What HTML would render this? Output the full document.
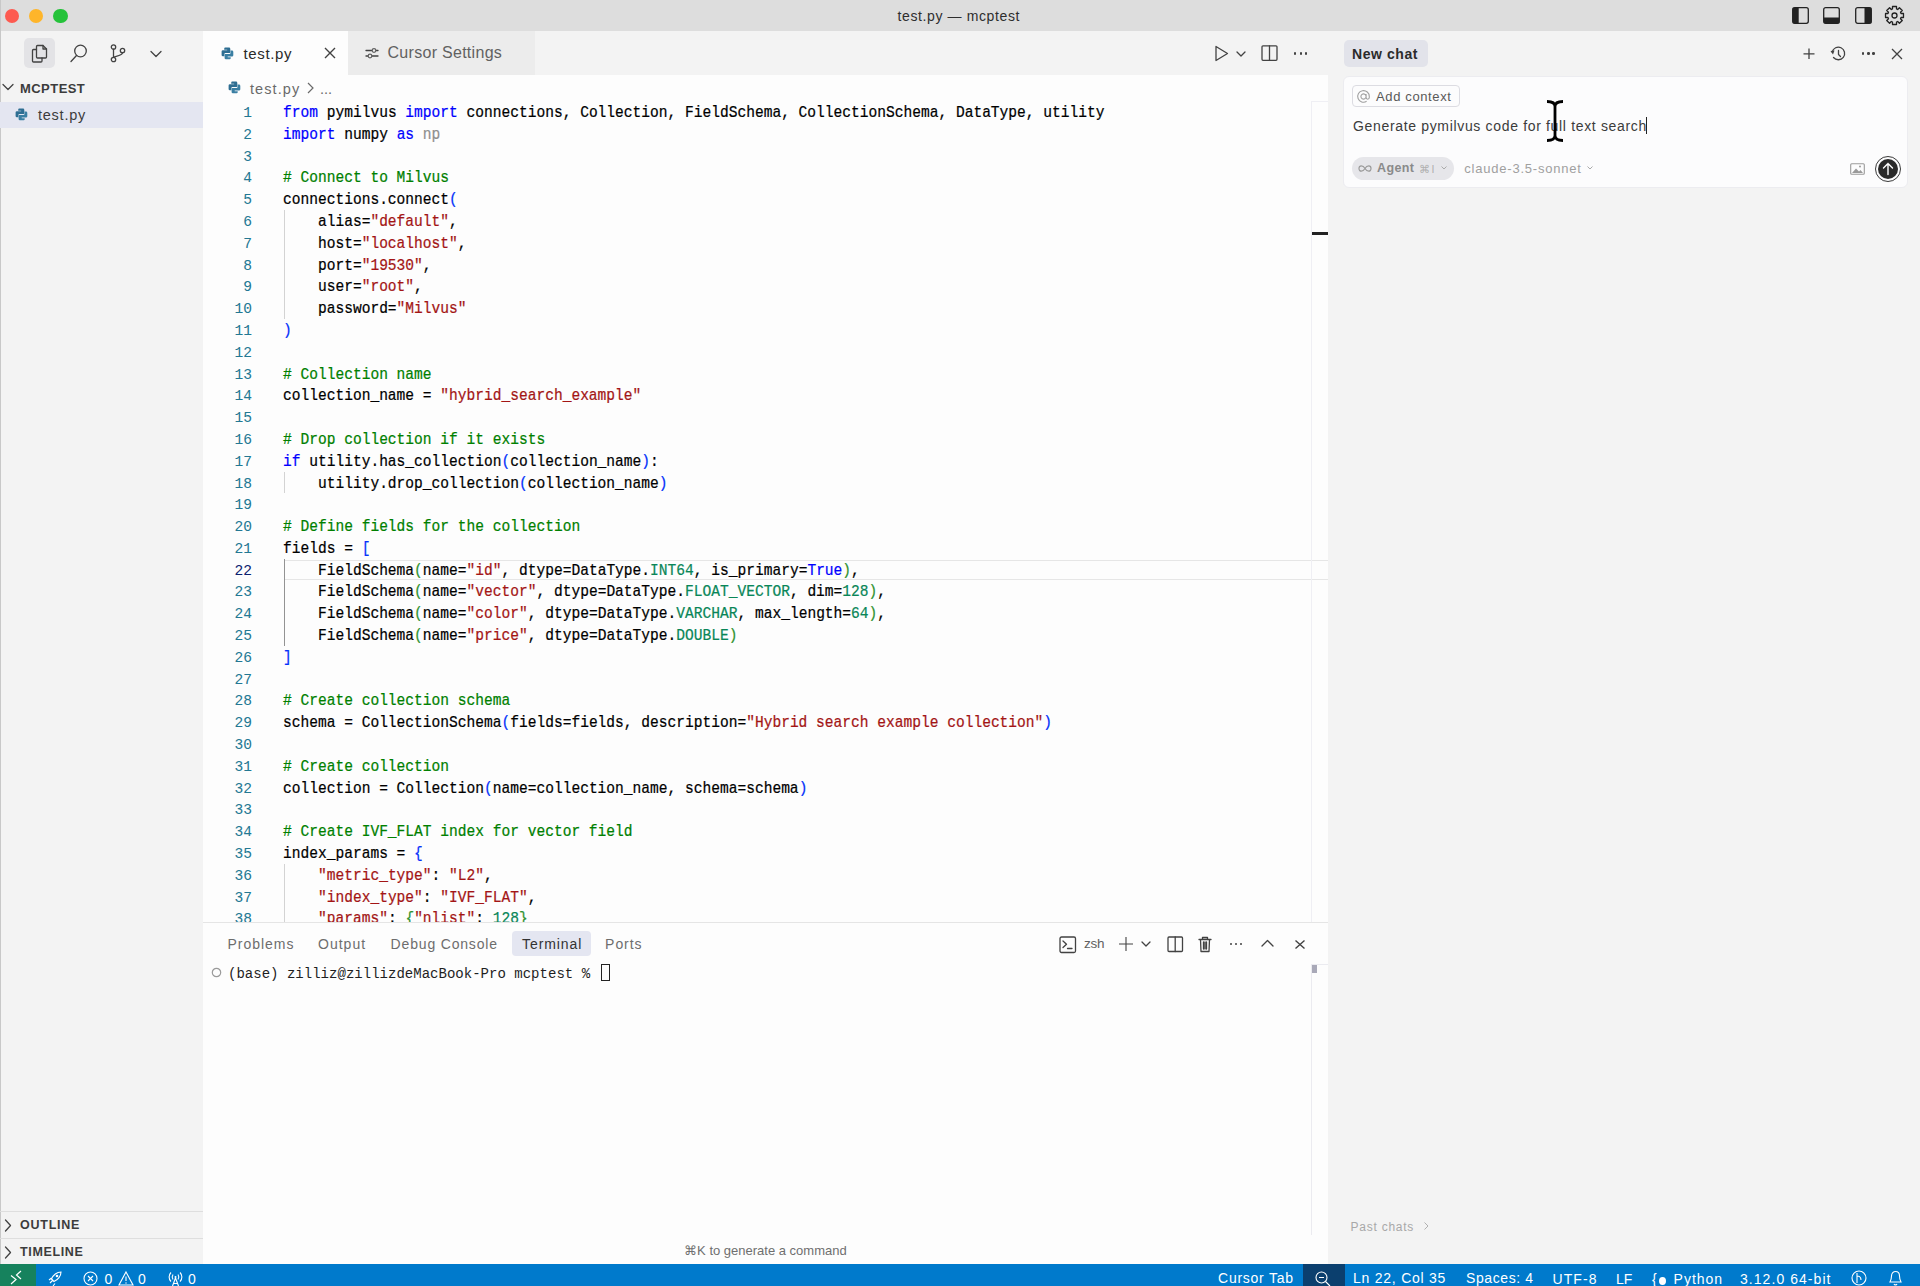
<!DOCTYPE html><html><head><meta charset="utf-8"><style>
*{box-sizing:border-box;margin:0;padding:0}
html,body{width:1920px;height:1286px;overflow:hidden;background:#fdfdfd;font-family:"Liberation Sans",sans-serif;color:#333}
.a{position:absolute;white-space:pre}
.mono{font-family:"Liberation Mono",monospace}
.code{font-family:"Liberation Mono",monospace;font-size:14.57px;line-height:21.78px;color:#000;height:21.78px;-webkit-text-stroke:0.2px currentColor;transform:scaleY(1.08);transform-origin:0 14.77px}
.ln{font-family:"Liberation Mono",monospace;font-size:14.57px;line-height:21.78px;color:#237893;text-align:right;width:60px;height:21.78px;-webkit-text-stroke:0.05px currentColor}
.k{color:#0000ff}.c{color:#008000}.s{color:#a31515}.n{color:#098658}.b1{color:#0431fa}.b2{color:#319331}.g{color:#8f8f8f}
svg{position:absolute;overflow:visible}
</style></head><body>
<div class="a" style="left:0px;top:0px;width:1920px;height:31px;background:#dddddd;"></div>
<div class="a" style="left:0px;top:31px;width:203px;height:1233px;background:#f3f3f3;"></div>
<div class="a" style="left:203px;top:31px;width:1125px;height:44px;background:#f3f3f3;"></div>
<div class="a" style="left:203px;top:75px;width:1125px;height:1189px;background:#fdfdfd;"></div>
<div class="a" style="left:1328px;top:31px;width:592px;height:1233px;background:#f3f3f3;"></div>
<div class="a" style="left:0px;top:1264px;width:1920px;height:22px;background:#007acc;"></div>
<div class="a" style="left:4.999999999999999px;top:9.1px;width:14.4px;height:14.4px;background:#fd5a50;border-radius:50%"></div>
<div class="a" style="left:29.099999999999998px;top:9.1px;width:14.4px;height:14.4px;background:#feb52a;border-radius:50%"></div>
<div class="a" style="left:53.3px;top:9.1px;width:14.4px;height:14.4px;background:#25c23a;border-radius:50%"></div>
<div class="a" style="left:0px;top:0px;width:1px;height:1286px;background:#c8c8c8;"></div>
<div class="a" style="left:897.50px;top:8.55px;font-family:'Liberation Sans',sans-serif;font-size:14px;line-height:1;color:#2e2e2e;font-weight:normal;letter-spacing:0.618px">test.py — mcptest</div>
<div class="a" style="left:285px;top:560px;width:1043px;height:20px;background:transparent;border-top:1px solid #e6e6e6;border-bottom:1.5px solid #e6e6e6"></div>
<div class="a" style="left:203px;top:75px;width:1108px;height:847px;overflow:hidden">
<div class="a ln" style="left:-11px;top:28.10px;color:#237893">1</div>
<div class="a code" style="left:80px;top:28.10px"><span class="k">from</span> pymilvus <span class="k">import</span> connections, Collection, FieldSchema, CollectionSchema, DataType, utility</div>
<div class="a ln" style="left:-11px;top:49.89px;color:#237893">2</div>
<div class="a code" style="left:80px;top:49.89px"><span class="k">import</span> numpy <span class="k">as</span><span class="g"> np</span></div>
<div class="a ln" style="left:-11px;top:71.68px;color:#237893">3</div>
<div class="a code" style="left:80px;top:71.68px"></div>
<div class="a ln" style="left:-11px;top:93.47px;color:#237893">4</div>
<div class="a code" style="left:80px;top:93.47px"><span class="c"># Connect to Milvus</span></div>
<div class="a ln" style="left:-11px;top:115.26px;color:#237893">5</div>
<div class="a code" style="left:80px;top:115.26px">connections.connect<span class="b1">(</span></div>
<div class="a ln" style="left:-11px;top:137.05px;color:#237893">6</div>
<div class="a code" style="left:80px;top:137.05px">    alias=<span class="s">&quot;default&quot;</span>,</div>
<div class="a ln" style="left:-11px;top:158.84px;color:#237893">7</div>
<div class="a code" style="left:80px;top:158.84px">    host=<span class="s">&quot;localhost&quot;</span>,</div>
<div class="a ln" style="left:-11px;top:180.63px;color:#237893">8</div>
<div class="a code" style="left:80px;top:180.63px">    port=<span class="s">&quot;19530&quot;</span>,</div>
<div class="a ln" style="left:-11px;top:202.42px;color:#237893">9</div>
<div class="a code" style="left:80px;top:202.42px">    user=<span class="s">&quot;root&quot;</span>,</div>
<div class="a ln" style="left:-11px;top:224.21px;color:#237893">10</div>
<div class="a code" style="left:80px;top:224.21px">    password=<span class="s">&quot;Milvus&quot;</span></div>
<div class="a ln" style="left:-11px;top:246.00px;color:#237893">11</div>
<div class="a code" style="left:80px;top:246.00px"><span class="b1">)</span></div>
<div class="a ln" style="left:-11px;top:267.79px;color:#237893">12</div>
<div class="a code" style="left:80px;top:267.79px"></div>
<div class="a ln" style="left:-11px;top:289.58px;color:#237893">13</div>
<div class="a code" style="left:80px;top:289.58px"><span class="c"># Collection name</span></div>
<div class="a ln" style="left:-11px;top:311.37px;color:#237893">14</div>
<div class="a code" style="left:80px;top:311.37px">collection_name = <span class="s">&quot;hybrid_search_example&quot;</span></div>
<div class="a ln" style="left:-11px;top:333.16px;color:#237893">15</div>
<div class="a code" style="left:80px;top:333.16px"></div>
<div class="a ln" style="left:-11px;top:354.95px;color:#237893">16</div>
<div class="a code" style="left:80px;top:354.95px"><span class="c"># Drop collection if it exists</span></div>
<div class="a ln" style="left:-11px;top:376.74px;color:#237893">17</div>
<div class="a code" style="left:80px;top:376.74px"><span class="k">if</span> utility.has_collection<span class="b1">(</span>collection_name<span class="b1">)</span>:</div>
<div class="a ln" style="left:-11px;top:398.53px;color:#237893">18</div>
<div class="a code" style="left:80px;top:398.53px">    utility.drop_collection<span class="b1">(</span>collection_name<span class="b1">)</span></div>
<div class="a ln" style="left:-11px;top:420.32px;color:#237893">19</div>
<div class="a code" style="left:80px;top:420.32px"></div>
<div class="a ln" style="left:-11px;top:442.11px;color:#237893">20</div>
<div class="a code" style="left:80px;top:442.11px"><span class="c"># Define fields for the collection</span></div>
<div class="a ln" style="left:-11px;top:463.90px;color:#237893">21</div>
<div class="a code" style="left:80px;top:463.90px">fields = <span class="b1">[</span></div>
<div class="a ln" style="left:-11px;top:485.69px;color:#0b216f">22</div>
<div class="a code" style="left:80px;top:485.69px">    FieldSchema<span class="b2">(</span>name=<span class="s">&quot;id&quot;</span>, dtype=DataType.<span class="n">INT64</span>, is_primary=<span class="k">True</span><span class="b2">)</span>,</div>
<div class="a ln" style="left:-11px;top:507.48px;color:#237893">23</div>
<div class="a code" style="left:80px;top:507.48px">    FieldSchema<span class="b2">(</span>name=<span class="s">&quot;vector&quot;</span>, dtype=DataType.<span class="n">FLOAT_VECTOR</span>, dim=<span class="n">128</span><span class="b2">)</span>,</div>
<div class="a ln" style="left:-11px;top:529.27px;color:#237893">24</div>
<div class="a code" style="left:80px;top:529.27px">    FieldSchema<span class="b2">(</span>name=<span class="s">&quot;color&quot;</span>, dtype=DataType.<span class="n">VARCHAR</span>, max_length=<span class="n">64</span><span class="b2">)</span>,</div>
<div class="a ln" style="left:-11px;top:551.06px;color:#237893">25</div>
<div class="a code" style="left:80px;top:551.06px">    FieldSchema<span class="b2">(</span>name=<span class="s">&quot;price&quot;</span>, dtype=DataType.<span class="n">DOUBLE</span><span class="b2">)</span></div>
<div class="a ln" style="left:-11px;top:572.85px;color:#237893">26</div>
<div class="a code" style="left:80px;top:572.85px"><span class="b1">]</span></div>
<div class="a ln" style="left:-11px;top:594.64px;color:#237893">27</div>
<div class="a code" style="left:80px;top:594.64px"></div>
<div class="a ln" style="left:-11px;top:616.43px;color:#237893">28</div>
<div class="a code" style="left:80px;top:616.43px"><span class="c"># Create collection schema</span></div>
<div class="a ln" style="left:-11px;top:638.22px;color:#237893">29</div>
<div class="a code" style="left:80px;top:638.22px">schema = CollectionSchema<span class="b1">(</span>fields=fields, description=<span class="s">&quot;Hybrid search example collection&quot;</span><span class="b1">)</span></div>
<div class="a ln" style="left:-11px;top:660.01px;color:#237893">30</div>
<div class="a code" style="left:80px;top:660.01px"></div>
<div class="a ln" style="left:-11px;top:681.80px;color:#237893">31</div>
<div class="a code" style="left:80px;top:681.80px"><span class="c"># Create collection</span></div>
<div class="a ln" style="left:-11px;top:703.59px;color:#237893">32</div>
<div class="a code" style="left:80px;top:703.59px">collection = Collection<span class="b1">(</span>name=collection_name, schema=schema<span class="b1">)</span></div>
<div class="a ln" style="left:-11px;top:725.38px;color:#237893">33</div>
<div class="a code" style="left:80px;top:725.38px"></div>
<div class="a ln" style="left:-11px;top:747.17px;color:#237893">34</div>
<div class="a code" style="left:80px;top:747.17px"><span class="c"># Create IVF_FLAT index for vector field</span></div>
<div class="a ln" style="left:-11px;top:768.96px;color:#237893">35</div>
<div class="a code" style="left:80px;top:768.96px">index_params = <span class="b1">{</span></div>
<div class="a ln" style="left:-11px;top:790.75px;color:#237893">36</div>
<div class="a code" style="left:80px;top:790.75px">    <span class="s">&quot;metric_type&quot;</span>: <span class="s">&quot;L2&quot;</span>,</div>
<div class="a ln" style="left:-11px;top:812.54px;color:#237893">37</div>
<div class="a code" style="left:80px;top:812.54px">    <span class="s">&quot;index_type&quot;</span>: <span class="s">&quot;IVF_FLAT&quot;</span>,</div>
<div class="a ln" style="left:-11px;top:834.33px;color:#237893">38</div>
<div class="a code" style="left:80px;top:834.33px">    <span class="s">&quot;params&quot;</span>: <span class="b2">{</span><span class="s">&quot;nlist&quot;</span>: <span class="n">128</span><span class="b2">}</span></div>
</div>
<div class="a" style="left:284px;top:210.14999999999998px;width:1px;height:108.94999999999999px;background:#d3d3d3;"></div>
<div class="a" style="left:284px;top:471.63px;width:1px;height:21.79px;background:#d3d3d3;"></div>
<div class="a" style="left:284px;top:558.79px;width:1px;height:87.16px;background:#939393;"></div>
<div class="a" style="left:284px;top:863.85px;width:1px;height:58.14999999999998px;background:#d3d3d3;"></div>
<div class="a" style="left:24px;top:38px;width:31px;height:30px;background:#e3e3e6;border-radius:5px"></div>
<svg style="left:31px;top:44px;" width="18" height="19" viewBox="0 0 18 19"><path fill="none" stroke="#424242" stroke-width="1.3" stroke-linejoin="round" stroke-linecap="round" d="M5.5 5.5 H2.5 a1 1 0 0 0 -1 1 V17 a1 1 0 0 0 1 1 H10 a1 1 0 0 0 1 -1 V14"/><path fill="none" stroke="#424242" stroke-width="1.3" stroke-linejoin="round" stroke-linecap="round" d="M6.5 1.5 H12 L15.5 5 V13 a1 1 0 0 1 -1 1 H6.5 a1 1 0 0 1 -1 -1 V2.5 a1 1 0 0 1 1 -1 Z"/><path fill="none" stroke="#424242" stroke-width="1.3" stroke-linejoin="round" stroke-linecap="round" d="M12 1.5 V5 H15.5"/></svg>
<svg style="left:70px;top:44px;" width="18" height="19" viewBox="0 0 18 19"><circle fill="none" stroke="#424242" stroke-width="1.3" stroke-linejoin="round" stroke-linecap="round" cx="10.5" cy="7" r="5.8"/><path fill="none" stroke="#424242" stroke-width="1.3" stroke-linejoin="round" stroke-linecap="round" d="M6.5 11.5 L1 17.5"/></svg>
<svg style="left:110px;top:44px;" width="16" height="19" viewBox="0 0 16 19"><circle fill="none" stroke="#424242" stroke-width="1.3" stroke-linejoin="round" stroke-linecap="round" cx="3.5" cy="3" r="2.2"/><circle fill="none" stroke="#424242" stroke-width="1.3" stroke-linejoin="round" stroke-linecap="round" cx="3.5" cy="15.5" r="2.2"/><circle fill="none" stroke="#424242" stroke-width="1.3" stroke-linejoin="round" stroke-linecap="round" cx="12.5" cy="6.5" r="2.2"/><path fill="none" stroke="#424242" stroke-width="1.3" stroke-linejoin="round" stroke-linecap="round" d="M3.5 5.2 V13.3 M12.5 8.7 C12.5 11 9 11.5 3.8 13"/></svg>
<svg style="left:150px;top:50px;" width="12" height="8" viewBox="0 0 12 8"><path fill="none" stroke="#424242" stroke-width="1.3" stroke-linejoin="round" stroke-linecap="round" d="M1 1.5 L6 6.5 L11 1.5"/></svg>
<svg style="left:2px;top:83px;" width="12" height="8" viewBox="0 0 12 8"><path fill="none" stroke="#424242" stroke-width="1.3" stroke-linejoin="round" stroke-linecap="round" d="M1 1.5 L6 6.5 L11 1.5"/></svg>
<div class="a" style="left:20.00px;top:81.60px;font-family:'Liberation Sans',sans-serif;font-size:13px;line-height:1;color:#3c3c3c;font-weight:bold;letter-spacing:0.450px">MCPTEST</div>
<div class="a" style="left:0px;top:102px;width:203px;height:26px;background:#e4e6f1;"></div>
<svg style="left:15px;top:107.5px;" width="13" height="13" viewBox="0 0 13 13"><path fill="#2e6e92" d="M4.3 0.6 H8 Q9.3 0.6 9.3 1.9 V5.3 Q9.3 5.9 8.7 5.9 H4.4 Q3.4 5.9 3.4 6.9 V9.3 H1.9 Q0.6 9.3 0.6 8 V4.6 Q0.6 3.3 1.9 3.3 H6.2 V2.7 H3.2 V1.7 Q3.2 0.6 4.3 0.6 Z"/><path fill="#3a7fa3" transform="rotate(180 6.45 6.45)" d="M4.3 0.6 H8 Q9.3 0.6 9.3 1.9 V5.3 Q9.3 5.9 8.7 5.9 H4.4 Q3.4 5.9 3.4 6.9 V9.3 H1.9 Q0.6 9.3 0.6 8 V4.6 Q0.6 3.3 1.9 3.3 H6.2 V2.7 H3.2 V1.7 Q3.2 0.6 4.3 0.6 Z"/></svg>
<div class="a" style="left:37.92px;top:108.03px;font-family:'Liberation Sans',sans-serif;font-size:14.5px;line-height:1;color:#3b3b3b;font-weight:normal;letter-spacing:0.780px">test.py</div>
<div class="a" style="left:0px;top:1211px;width:203px;height:1px;background:#dedede;"></div>
<div class="a" style="left:0px;top:1238px;width:203px;height:1px;background:#dedede;"></div>
<svg style="left:4px;top:1219px;" width="8" height="13" viewBox="0 0 8 13"><path fill="none" stroke="#424242" stroke-width="1.3" stroke-linejoin="round" stroke-linecap="round" d="M1.5 1 L6.5 6.5 L1.5 12"/></svg>
<svg style="left:4px;top:1246px;" width="8" height="13" viewBox="0 0 8 13"><path fill="none" stroke="#424242" stroke-width="1.3" stroke-linejoin="round" stroke-linecap="round" d="M1.5 1 L6.5 6.5 L1.5 12"/></svg>
<div class="a" style="left:20.00px;top:1219.12px;font-family:'Liberation Sans',sans-serif;font-size:12.5px;line-height:1;color:#3c3c3c;font-weight:bold;letter-spacing:0.750px">OUTLINE</div>
<div class="a" style="left:20.00px;top:1246.02px;font-family:'Liberation Sans',sans-serif;font-size:12.5px;line-height:1;color:#3c3c3c;font-weight:bold;letter-spacing:0.643px">TIMELINE</div>
<div class="a" style="left:203px;top:31px;width:145px;height:44px;background:#fdfdfd;"></div>
<div class="a" style="left:348px;top:31px;width:187px;height:44px;background:#ececec;"></div>
<svg style="left:221px;top:47px;" width="13" height="13" viewBox="0 0 13 13"><path fill="#2e6e92" d="M4.3 0.6 H8 Q9.3 0.6 9.3 1.9 V5.3 Q9.3 5.9 8.7 5.9 H4.4 Q3.4 5.9 3.4 6.9 V9.3 H1.9 Q0.6 9.3 0.6 8 V4.6 Q0.6 3.3 1.9 3.3 H6.2 V2.7 H3.2 V1.7 Q3.2 0.6 4.3 0.6 Z"/><path fill="#3a7fa3" transform="rotate(180 6.45 6.45)" d="M4.3 0.6 H8 Q9.3 0.6 9.3 1.9 V5.3 Q9.3 5.9 8.7 5.9 H4.4 Q3.4 5.9 3.4 6.9 V9.3 H1.9 Q0.6 9.3 0.6 8 V4.6 Q0.6 3.3 1.9 3.3 H6.2 V2.7 H3.2 V1.7 Q3.2 0.6 4.3 0.6 Z"/></svg>
<div class="a" style="left:243.46px;top:46.40px;font-family:'Liberation Sans',sans-serif;font-size:15px;line-height:1;color:#2a2a2a;font-weight:normal;letter-spacing:0.660px">test.py</div>
<svg style="left:324px;top:47px;" width="12" height="12" viewBox="0 0 12 12"><path fill="none" stroke="#424242" stroke-width="1.4" d="M1 1 L11 11 M11 1 L1 11"/></svg>
<svg style="left:365px;top:46px;" width="14" height="14" viewBox="0 0 14 14"><path fill="none" stroke="#424242" stroke-width="1.3" stroke-linejoin="round" stroke-linecap="round" d="M1 4.5 H13 M1 10 H13"/><circle cx="9" cy="4.5" r="1.8" fill="#ececec" stroke="#616161" stroke-width="1.2"/><circle cx="5" cy="10" r="1.8" fill="#ececec" stroke="#616161" stroke-width="1.2"/></svg>
<div class="a" style="left:387.54px;top:45.26px;font-family:'Liberation Sans',sans-serif;font-size:16px;line-height:1;color:#616161;font-weight:normal;letter-spacing:0.287px">Cursor Settings</div>
<svg style="left:1214px;top:45px;" width="15" height="17" viewBox="0 0 15 17"><path fill="none" stroke="#424242" stroke-width="1.3" stroke-linejoin="round" stroke-linecap="round" d="M2 1.5 L13.5 8.5 L2 15.5 Z"/></svg>
<svg style="left:1236px;top:51px;" width="10" height="6" viewBox="0 0 10 6"><path fill="none" stroke="#424242" stroke-width="1.3" stroke-linejoin="round" stroke-linecap="round" d="M1 1 L5 5 L9 1"/></svg>
<svg style="left:1261px;top:45px;" width="17" height="16" viewBox="0 0 17 16"><rect fill="none" stroke="#424242" stroke-width="1.3" stroke-linejoin="round" stroke-linecap="round" x="1" y="0.8" width="15" height="14.5" rx="1"/><path fill="none" stroke="#424242" stroke-width="1.3" stroke-linejoin="round" stroke-linecap="round" d="M8.5 1 V15"/></svg>
<div class="a" style="left:1294px;top:52.3px;width:2.4px;height:2.4px;background:#424242;border-radius:50%"></div>
<div class="a" style="left:1299.5px;top:52.3px;width:2.4px;height:2.4px;background:#424242;border-radius:50%"></div>
<div class="a" style="left:1305px;top:52.3px;width:2.4px;height:2.4px;background:#424242;border-radius:50%"></div>
<svg style="left:228px;top:81px;" width="13" height="13" viewBox="0 0 13 13"><path fill="#2e6e92" d="M4.3 0.6 H8 Q9.3 0.6 9.3 1.9 V5.3 Q9.3 5.9 8.7 5.9 H4.4 Q3.4 5.9 3.4 6.9 V9.3 H1.9 Q0.6 9.3 0.6 8 V4.6 Q0.6 3.3 1.9 3.3 H6.2 V2.7 H3.2 V1.7 Q3.2 0.6 4.3 0.6 Z"/><path fill="#3a7fa3" transform="rotate(180 6.45 6.45)" d="M4.3 0.6 H8 Q9.3 0.6 9.3 1.9 V5.3 Q9.3 5.9 8.7 5.9 H4.4 Q3.4 5.9 3.4 6.9 V9.3 H1.9 Q0.6 9.3 0.6 8 V4.6 Q0.6 3.3 1.9 3.3 H6.2 V2.7 H3.2 V1.7 Q3.2 0.6 4.3 0.6 Z"/></svg>
<div class="a" style="left:250.02px;top:81.53px;font-family:'Liberation Sans',sans-serif;font-size:14.5px;line-height:1;color:#6a6a6a;font-weight:normal;letter-spacing:1.080px">test.py</div>
<svg style="left:306.5px;top:82px;" width="7" height="12" viewBox="0 0 7 12"><path fill="none" stroke="#6a6a6a" stroke-width="1.2" d="M1 1 L6 6 L1 11"/></svg>
<div class="a" style="left:320.00px;top:81.53px;font-family:'Liberation Sans',sans-serif;font-size:14.5px;line-height:1;color:#6a6a6a;font-weight:normal;letter-spacing:0.000px">...</div>
<div class="a" style="left:1311px;top:101px;width:1px;height:821px;background:#efeff4;"></div>
<div class="a" style="left:1311px;top:101px;width:17px;height:1px;background:#efeff4;"></div>
<div class="a" style="left:1312px;top:232px;width:16px;height:2.5px;background:#222;"></div>
<div class="a" style="left:203px;top:922px;width:1125px;height:1px;background:#e5e5e5;"></div>
<div class="a" style="left:227.58px;top:937.15px;font-family:'Liberation Sans',sans-serif;font-size:14px;line-height:1;color:#6d6d6d;font-weight:normal;letter-spacing:0.957px">Problems</div>
<div class="a" style="left:318.04px;top:937.15px;font-family:'Liberation Sans',sans-serif;font-size:14px;line-height:1;color:#6d6d6d;font-weight:normal;letter-spacing:1.008px">Output</div>
<div class="a" style="left:390.62px;top:937.15px;font-family:'Liberation Sans',sans-serif;font-size:14px;line-height:1;color:#6d6d6d;font-weight:normal;letter-spacing:0.825px">Debug Console</div>
<div class="a" style="left:512px;top:931px;width:79px;height:25px;background:#e4e6f1;border-radius:4px"></div>
<div class="a" style="left:522.02px;top:937.15px;font-family:'Liberation Sans',sans-serif;font-size:14px;line-height:1;color:#333333;font-weight:normal;letter-spacing:0.922px">Terminal</div>
<div class="a" style="left:605.10px;top:937.15px;font-family:'Liberation Sans',sans-serif;font-size:14px;line-height:1;color:#6d6d6d;font-weight:normal;letter-spacing:0.945px">Ports</div>
<svg style="left:1059px;top:936px;" width="17" height="17" viewBox="0 0 17 17"><rect fill="none" stroke="#424242" stroke-width="1.3" stroke-linejoin="round" stroke-linecap="round" x="1" y="1" width="15.5" height="15.5" rx="1.5"/><path fill="none" stroke="#424242" stroke-width="1.3" stroke-linejoin="round" stroke-linecap="round" d="M4 5 L7.5 8.2 L4 11.5 M8.5 12.5 H13"/></svg>
<div class="a" style="left:1083.98px;top:937.47px;font-family:'Liberation Sans',sans-serif;font-size:13.5px;line-height:1;color:#616161;font-weight:normal;letter-spacing:-0.180px">zsh</div>
<svg style="left:1118px;top:936px;" width="16" height="16" viewBox="0 0 16 16"><path fill="none" stroke="#424242" stroke-width="1.1" d="M8 1 V15 M1 8 H15"/></svg>
<svg style="left:1141px;top:941px;" width="10" height="6" viewBox="0 0 10 6"><path fill="none" stroke="#424242" stroke-width="1.3" stroke-linejoin="round" stroke-linecap="round" d="M1 1 L5 5 L9 1"/></svg>
<svg style="left:1167px;top:936px;" width="16" height="16" viewBox="0 0 16 16"><rect fill="none" stroke="#424242" stroke-width="1.3" stroke-linejoin="round" stroke-linecap="round" x="1" y="1" width="14.5" height="14.5" rx="1"/><path fill="none" stroke="#424242" stroke-width="1.3" stroke-linejoin="round" stroke-linecap="round" d="M8.2 1 V15.5"/></svg>
<svg style="left:1198px;top:936px;" width="14" height="17" viewBox="0 0 14 17"><path fill="none" stroke="#424242" stroke-width="1.3" stroke-linejoin="round" stroke-linecap="round" d="M1 3.5 H13 M4.5 3.5 V1.5 H9.5 V3.5 M2.5 3.5 L3 15.5 H11 L11.5 3.5 M5.5 6 V13 M7 6 V13 M8.5 6 V13"/></svg>
<div class="a" style="left:1230px;top:943px;width:2.3px;height:2.3px;background:#424242;border-radius:50%"></div>
<div class="a" style="left:1235px;top:943px;width:2.3px;height:2.3px;background:#424242;border-radius:50%"></div>
<div class="a" style="left:1240px;top:943px;width:2.3px;height:2.3px;background:#424242;border-radius:50%"></div>
<svg style="left:1261px;top:939px;" width="13" height="8" viewBox="0 0 13 8"><path fill="none" stroke="#424242" stroke-width="1.3" stroke-linejoin="round" stroke-linecap="round" d="M1 7 L6.5 1.5 L12 7"/></svg>
<svg style="left:1295px;top:940px;" width="10" height="9" viewBox="0 0 10 9"><path fill="none" stroke="#424242" stroke-width="1.4" d="M0.5 0.5 L9.5 8.5 M9.5 0.5 L0.5 8.5"/></svg>
<svg style="left:211px;top:967px;" width="11" height="11" viewBox="0 0 11 11"><circle cx="5.5" cy="5.5" r="4.2" fill="none" stroke="#9a9a9a" stroke-width="1.2"/></svg>
<div class="a" style="left:228px;top:966.74px;font-family:Liberation Mono,monospace;font-size:14.04px;line-height:1;color:#1f1f1f">(base) zilliz@zillizdeMacBook-Pro mcptest % </div>
<div class="a" style="left:600.5px;top:964px;width:9px;height:17px;background:transparent;border:1.3px solid #222"></div>
<div class="a" style="left:1311px;top:964px;width:1px;height:271px;background:#ebebf0;"></div>
<div class="a" style="left:1311px;top:964px;width:17px;height:1px;background:#ebebf0;"></div>
<div class="a" style="left:1312px;top:965px;width:5px;height:8px;background:#a9a9b8;"></div>
<div class="a" style="left:684.10px;top:1244.30px;font-family:'Liberation Sans',sans-serif;font-size:13px;line-height:1;color:#6f6f6f;font-weight:normal;letter-spacing:0.000px">⌘K to generate a command</div>
<div class="a" style="left:1343.5px;top:40px;width:84px;height:27px;background:#e2e3ea;border-radius:5px"></div>
<div class="a" style="left:1352.04px;top:46.75px;font-family:'Liberation Sans',sans-serif;font-size:14px;line-height:1;color:#2b2b2b;font-weight:bold;letter-spacing:0.563px">New chat</div>
<svg style="left:1803px;top:48px;" width="12" height="12" viewBox="0 0 12 12"><path fill="none" stroke="#424242" stroke-width="1.3" d="M6 0.5 V11 M0.5 5.8 H11.5"/></svg>
<svg style="left:1830px;top:46px;" width="16" height="16" viewBox="0 0 16 16"><path fill="none" stroke="#424242" stroke-width="1.3" stroke-linejoin="round" stroke-linecap="round" d="M2.2 6 A6.3 6.3 0 1 1 3.5 11.5"/><path fill="#424242" d="M0.5 5 L4.5 4.5 L3 8.5 Z"/><path fill="none" stroke="#424242" stroke-width="1.3" stroke-linejoin="round" stroke-linecap="round" d="M8.5 4.5 V8.5 L10.5 10.5"/></svg>
<div class="a" style="left:1862px;top:52.3px;width:2.4px;height:2.4px;background:#424242;border-radius:50%"></div>
<div class="a" style="left:1867.2px;top:52.3px;width:2.4px;height:2.4px;background:#424242;border-radius:50%"></div>
<div class="a" style="left:1872.4px;top:52.3px;width:2.4px;height:2.4px;background:#424242;border-radius:50%"></div>
<svg style="left:1891px;top:48px;" width="12" height="12" viewBox="0 0 12 12"><path fill="none" stroke="#424242" stroke-width="1.3" d="M1 1 L11 11 M11 1 L1 11"/></svg>
<div class="a" style="left:1343px;top:75.5px;width:565px;height:112.5px;background:#fcfcfd;border-radius:6px;border:1px solid #ececf0"></div>
<div class="a" style="left:1352px;top:85px;width:108px;height:22px;background:transparent;border:1px solid #dcdce2;border-radius:4px"></div>
<svg style="left:1357px;top:89.5px;" width="13" height="13" viewBox="0 0 13 13"><path fill="none" stroke="#a0a0a0" stroke-width="1.1" d="M9.6 11.3 A5.8 5.8 0 1 1 12.3 6.5 V7.6 A1.6 1.6 0 0 1 9.1 7.6 V4 M9.1 6.5 A2.6 2.6 0 1 1 9.1 6.49"/></svg>
<div class="a" style="left:1376.00px;top:90.00px;font-family:'Liberation Sans',sans-serif;font-size:13px;line-height:1;color:#595959;font-weight:normal;letter-spacing:0.630px">Add context</div>
<div class="a" style="left:1353.00px;top:118.55px;font-family:'Liberation Sans',sans-serif;font-size:14px;line-height:1;color:#3b3b3b;font-weight:normal;letter-spacing:0.665px">Generate pymilvus code for full text search</div>
<div class="a" style="left:1646px;top:117px;width:1.3px;height:17px;background:#222;"></div>
<div class="a" style="left:1352px;top:157px;width:102px;height:23px;background:#e6e6ea;border-radius:12px"></div>
<svg style="left:1358px;top:164px;" width="14" height="9" viewBox="0 0 14 9"><path fill="none" stroke="#9a9a9a" stroke-width="1.2" d="M7 4.5 C5 1 1 1 1 4.5 C1 8 5 8 7 4.5 C9 1 13 1 13 4.5 C13 8 9 8 7 4.5 Z"/></svg>
<div class="a" style="left:1376.98px;top:162.42px;font-family:'Liberation Sans',sans-serif;font-size:12.5px;line-height:1;color:#8a8a8a;font-weight:bold;letter-spacing:0.405px">Agent</div>
<div class="a" style="left:1418.60px;top:164.11px;font-family:'Liberation Sans',sans-serif;font-size:10.5px;line-height:1;color:#b0b0b0;font-weight:normal;letter-spacing:1.800px">⌘I</div>
<svg style="left:1441px;top:166px;" width="6" height="4" viewBox="0 0 6 4"><path fill="none" stroke="#aaa" stroke-width="1" d="M0.5 0.5 L3 3 L5.5 0.5"/></svg>
<div class="a" style="left:1464.26px;top:162.00px;font-family:'Liberation Sans',sans-serif;font-size:13px;line-height:1;color:#a0a0a0;font-weight:normal;letter-spacing:0.787px">claude-3.5-sonnet</div>
<svg style="left:1587px;top:166px;" width="6" height="4" viewBox="0 0 6 4"><path fill="none" stroke="#aaa" stroke-width="1" d="M0.5 0.5 L3 3 L5.5 0.5"/></svg>
<svg style="left:1850px;top:163px;" width="15" height="12" viewBox="0 0 15 12"><rect x="0.7" y="0.7" width="13.6" height="10.6" rx="1" fill="none" stroke="#9a9a9a" stroke-width="1.1"/><path fill="#9a9a9a" d="M2 10 L6 5.5 L9 8.5 L10.5 7 L13 10 Z"/><circle cx="10" cy="3.5" r="1" fill="#9a9a9a"/></svg>
<div class="a" style="left:1875px;top:156px;width:26px;height:26px;background:#fcfcfd;border-radius:50%;border:1.6px solid #3a3a3a"></div>
<div class="a" style="left:1878px;top:159px;width:20px;height:20px;background:#2a2a2a;border-radius:50%"></div>
<svg style="left:1881px;top:162px;" width="14" height="14" viewBox="0 0 14 14"><path fill="none" stroke="#fff" stroke-width="1.4" stroke-linecap="round" d="M7 12.5 V1.5 M2.5 6 L7 1.5 L11.5 6"/></svg>
<svg style="left:1546px;top:100px;" width="18" height="42" viewBox="0 0 18 42"><path fill="none" stroke="#000" stroke-width="2.8" d="M1 1.5 C5 1.5 9 2 9 6.5 V35.5 C9 40 5 40.5 1 40.5 M17 1.5 C13 1.5 9 2 9 6.5 M17 40.5 C13 40.5 9 40 9 35.5"/></svg>
<div class="a" style="left:1350.62px;top:1220.64px;font-family:'Liberation Sans',sans-serif;font-size:12px;line-height:1;color:#a8a8a8;font-weight:normal;letter-spacing:0.740px">Past chats</div>
<svg style="left:1424px;top:1222px;" width="5" height="8" viewBox="0 0 5 8"><path fill="none" stroke="#b0b0b0" stroke-width="1" d="M0.5 0.5 L4 4 L0.5 7.5"/></svg>
<div class="a" style="left:0px;top:1264px;width:36px;height:22px;background:#16825d;"></div>
<svg style="left:10px;top:1270px;" width="12" height="15" viewBox="0 0 12 15"><path fill="none" stroke="#fff" stroke-width="1.2" d="M1 14 L6 9.5 L1 5.5 M11 1 L6.5 5 L11 9"/></svg>
<svg style="left:47px;top:1271px;" width="15" height="15" viewBox="0 0 15 15"><path fill="none" stroke="#fff" stroke-width="1.1" d="M3 12 L5.5 9.5 M4.5 8 C6 4 10 1 14 1 C14 5 11 9 7 10.5 Z M2 9 L4.5 7 M8 12.5 L6 15"/><circle cx="10" cy="5" r="1.3" fill="#fff"/></svg>
<svg style="left:83px;top:1270.5px;" width="15" height="15" viewBox="0 0 15 15"><circle cx="7.5" cy="7.5" r="6.5" fill="none" stroke="#fff" stroke-width="1.1"/><path fill="none" stroke="#fff" stroke-width="1.1" d="M5 5 L10 10 M10 5 L5 10"/></svg>
<div class="a" style="left:104.48px;top:1272.15px;font-family:'Liberation Sans',sans-serif;font-size:14px;line-height:1;color:#fff;font-weight:normal;letter-spacing:0.000px">0</div>
<svg style="left:117.5px;top:1270.5px;" width="16" height="15" viewBox="0 0 16 15"><path fill="none" stroke="#fff" stroke-width="1.1" d="M8 1 L15 14 H1 Z M8 5.5 V10"/><circle cx="8" cy="12" r="0.7" fill="#fff"/></svg>
<div class="a" style="left:138.06px;top:1272.15px;font-family:'Liberation Sans',sans-serif;font-size:14px;line-height:1;color:#fff;font-weight:normal;letter-spacing:0.000px">0</div>
<svg style="left:168px;top:1270.5px;" width="15" height="15" viewBox="0 0 15 15"><path fill="none" stroke="#fff" stroke-width="1.1" d="M3 1.5 C0.5 4 0.5 8 3 10.5 M12 1.5 C14.5 4 14.5 8 12 10.5 M5 3.5 C4 5 4 7 5 8.5 M10 3.5 C11 5 11 7 10 8.5 M7.5 7 L4.5 15 M7.5 7 L10.5 15 M5.5 12.5 H9.5"/><circle cx="7.5" cy="6" r="1" fill="#fff"/></svg>
<div class="a" style="left:188.00px;top:1272.15px;font-family:'Liberation Sans',sans-serif;font-size:14px;line-height:1;color:#fff;font-weight:normal;letter-spacing:0.000px">0</div>
<div class="a" style="left:1218.08px;top:1271.45px;font-family:'Liberation Sans',sans-serif;font-size:14px;line-height:1;color:#fff;font-weight:normal;letter-spacing:0.740px">Cursor Tab</div>
<div class="a" style="left:1303px;top:1264px;width:42px;height:22px;background:#0b3f6e;"></div>
<svg style="left:1315px;top:1271px;" width="16" height="16" viewBox="0 0 16 16"><circle cx="6.5" cy="6.5" r="5.5" fill="none" stroke="#fff" stroke-width="1.1"/><path fill="none" stroke="#fff" stroke-width="1.1" d="M4 6.5 H9 M10.5 10.5 L15 15"/></svg>
<div class="a" style="left:1353.08px;top:1271.45px;font-family:'Liberation Sans',sans-serif;font-size:14px;line-height:1;color:#fff;font-weight:normal;letter-spacing:0.750px">Ln 22, Col 35</div>
<div class="a" style="left:1466.04px;top:1271.45px;font-family:'Liberation Sans',sans-serif;font-size:14px;line-height:1;color:#fff;font-weight:normal;letter-spacing:0.602px">Spaces: 4</div>
<div class="a" style="left:1552.60px;top:1271.55px;font-family:'Liberation Sans',sans-serif;font-size:14px;line-height:1;color:#fff;font-weight:normal;letter-spacing:1.047px">UTF-8</div>
<div class="a" style="left:1616.08px;top:1271.55px;font-family:'Liberation Sans',sans-serif;font-size:14px;line-height:1;color:#fff;font-weight:normal;letter-spacing:-0.180px">LF</div>
<div class="a" style="left:1652.00px;top:1271.55px;font-family:'Liberation Sans',sans-serif;font-size:14px;line-height:1;color:#fff;font-weight:normal;letter-spacing:0.000px">{</div>
<div class="a" style="left:1659px;top:1276.5px;width:7px;height:8px;background:#fff;border-radius:50%"></div>
<div class="a" style="left:1673.62px;top:1271.55px;font-family:'Liberation Sans',sans-serif;font-size:14px;line-height:1;color:#fff;font-weight:normal;letter-spacing:0.972px">Python</div>
<div class="a" style="left:1740.00px;top:1271.55px;font-family:'Liberation Sans',sans-serif;font-size:14px;line-height:1;color:#fff;font-weight:normal;letter-spacing:1.050px">3.12.0 64-bit</div>
<svg style="left:1851px;top:1269.5px;" width="16" height="16" viewBox="0 0 16 16"><circle cx="8" cy="8" r="7" fill="none" stroke="#fff" stroke-width="1.1"/><path fill="none" stroke="#fff" stroke-width="1.1" d="M6 3 V13 M6 6 C9 6 10 8 10 10"/></svg>
<svg style="left:1888px;top:1270px;" width="15" height="16" viewBox="0 0 15 16"><path fill="none" stroke="#fff" stroke-width="1.1" d="M2 12 C3 10 3.5 9 3.5 6 C3.5 3 5.5 1.5 7.5 1.5 C9.5 1.5 11.5 3 11.5 6 C11.5 9 12 10 13 12 Z M6 14 C6.5 15.2 8.5 15.2 9 14"/></svg>
<svg style="left:1792px;top:7px;" width="17" height="17" viewBox="0 0 17 17"><rect x="0.7" y="0.7" width="15.6" height="15.6" rx="2" fill="none" stroke="#222" stroke-width="1.3"/><rect x="0.7" y="0.7" width="6" height="15.6" fill="#222"/></svg>
<svg style="left:1823px;top:7px;" width="17" height="17" viewBox="0 0 17 17"><rect x="0.7" y="0.7" width="15.6" height="15.6" rx="2" fill="none" stroke="#222" stroke-width="1.3"/><rect x="0.7" y="10.5" width="15.6" height="5.8" fill="#222"/></svg>
<svg style="left:1855px;top:7px;" width="17" height="17" viewBox="0 0 17 17"><rect x="0.7" y="0.7" width="15.6" height="15.6" rx="2" fill="none" stroke="#222" stroke-width="1.3"/><rect x="9.5" y="0.7" width="6.8" height="15.6" fill="#222"/></svg>
<svg style="left:1885px;top:5.5px;" width="19" height="19" viewBox="0 0 19 19"><path fill="none" stroke="#222" stroke-width="1.3" stroke-linejoin="round" d="M18.48 7.49 L18.48 11.51 L16.00 11.51 L15.51 12.67 L17.27 14.43 L14.43 17.27 L12.67 15.51 L11.51 16.00 L11.51 18.48 L7.49 18.48 L7.49 16.00 L6.33 15.51 L4.57 17.27 L1.73 14.43 L3.49 12.67 L3.00 11.51 L0.52 11.51 L0.52 7.49 L3.00 7.49 L3.49 6.33 L1.73 4.57 L4.57 1.73 L6.33 3.49 L7.49 3.00 L7.49 0.52 L11.51 0.52 L11.51 3.00 L12.67 3.49 L14.43 1.73 L17.27 4.57 L15.51 6.33 L16.00 7.49 Z"/><circle cx="9.5" cy="9.5" r="2.5" fill="none" stroke="#222" stroke-width="1.3"/></svg>
</body></html>
